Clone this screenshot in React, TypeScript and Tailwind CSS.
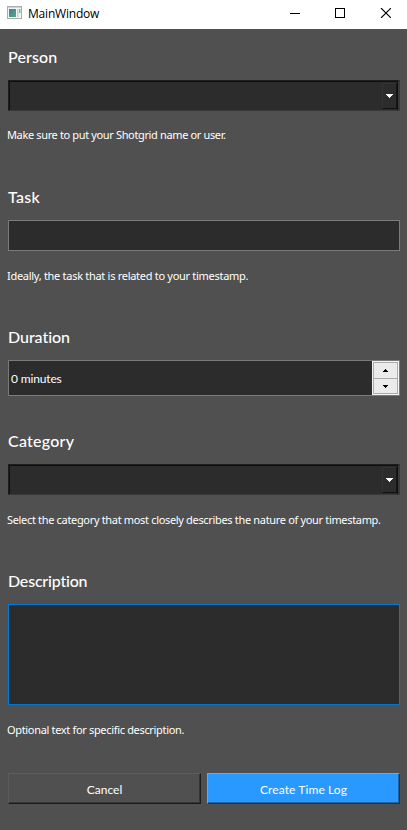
import type { ReactNode } from "react";

function Label({ children, spacing = "" }: { children: ReactNode; spacing?: string }) {
  return (
    <div className={`h-5 whitespace-nowrap font-['Lato',sans-serif] text-[16px] leading-[18px] font-medium text-white [font-variant-ligatures:none] ${spacing}`}>
      {children}
    </div>
  );
}

function Hint({ children, spacing }: { children: ReactNode; spacing: string }) {
  return (
    <div className={`-ml-px h-5 whitespace-nowrap font-['Noto_Sans',sans-serif] text-[11px] leading-5 text-white ${spacing}`}>
      {children}
    </div>
  );
}

function Combo() {
  return (
    <div className="h-[31px] border border-t-[#1e1e1e] border-r-2 border-r-[#393939] border-b-[#393939] border-l-[#1e1e1e] bg-[#2c2c2c]">
      <div className="flex h-[29px] justify-end border-t border-r border-l border-[#0f0f0f]">
        <div className="mt-px flex h-[26px] w-[15px] items-center justify-center border border-t-[#333] border-r-[#161616] border-b-[#111] border-l-[#333] bg-[#2c2c2c]">
          <svg width="7" height="4" viewBox="0 0 7 4" shapeRendering="crispEdges" fill="#fff">
            <path d="M0 0h7v1H0zM1 1h5v1H1zM2 2h3v1H2zM3 3h1v1H3z" />
          </svg>
        </div>
      </div>
    </div>
  );
}

export default function App() {
  return (
    <div className="flex h-[830px] w-[407px] flex-col overflow-hidden bg-[#505050]">
      <header className="flex h-[29px] items-start bg-white pl-[7px]">
        <svg className="mt-[6px]" width="15" height="13" viewBox="0 0 15 13">
          <defs>
            <linearGradient id="pane" x1="0" y1="0" x2="1" y2="1">
              <stop offset="0" stopColor="#4779ac" />
              <stop offset="1" stopColor="#54aa78" />
            </linearGradient>
          </defs>
          <rect x=".5" y=".5" width="14" height="12" fill="#f4f4f4" stroke="#a9adb0" />
          <path d="M1 1.5h13" stroke="#d0d3d5" />
          <rect x="2" y="3" width="7" height="8" fill="url(#pane)" />
          <rect x="10" y="3" width="1.5" height="8" fill="#c8d0d6" />
          <rect x="12" y="3" width="1.5" height="4" fill="#7fb5a4" />
        </svg>
        <h1 className="ml-[6px] flex-1 font-['Open_Sans',sans-serif] text-[12px] leading-[27px] tracking-[-0.2px] text-black">MainWindow</h1>
        <div className="mt-[8px] mr-[16px] flex gap-[35px]">
          <svg width="10" height="11" shapeRendering="crispEdges"><path d="M0 5h10v1H0z" /></svg>
          <svg width="10" height="10" shapeRendering="crispEdges"><path fillRule="evenodd" d="M0 0h10v10H0zM1 1v8h8V1z" /></svg>
          <svg width="11" height="10"><path d="M1 0l10 10M11 0L1 10" stroke="#000" strokeWidth="1.1" /></svg>
        </div>
      </header>
      <main className="flex flex-col pt-[19px] pr-[7px] pl-[8px]">
        <Label spacing="tracking-[0.15px]">Person</Label>
        <div className="mt-3"><Combo /></div>
        <div className="mt-[14px]"><Hint spacing="tracking-[-0.36px]">Make sure to put your Shotgrid name or user.</Hint></div>

        <div className="mt-[43px]"><Label spacing="tracking-[0.3px]">Task</Label></div>
        <div className="mt-3 h-[31px] border border-[#7a7a7a] bg-[#2c2c2c]" />
        <div className="mt-[15px]"><Hint spacing="tracking-[-0.29px]">Ideally, the task that is related to your timestamp.</Hint></div>

        <div className="mt-[42px]"><Label spacing="tracking-[-0.05px]">Duration</Label></div>
        <div className="mt-3 flex h-[36px] border border-[#7a7a7a] bg-[#2c2c2c]">
          <span className="flex-1 pl-[2px] font-['Lato',sans-serif] text-[12px] leading-[36px] tracking-[-0.15px] text-white">0 minutes</span>
          <div className="flex w-[27px] flex-col bg-[#f4f4f4] p-px">
            <div className="flex h-[17px] items-center justify-center border border-[#ababab] bg-[#ebebeb]">
              <svg width="5" height="3" shapeRendering="crispEdges"><path d="M2 0h1v1H2zM1 1h3v1H1zM0 2h5v1H0z" /></svg>
            </div>
            <div className="flex h-[15px] items-center justify-center border border-t-0 border-[#ababab] bg-[#ebebeb]">
              <svg width="5" height="3" shapeRendering="crispEdges"><path d="M0 0h5v1H0zM1 1h3v1H1zM2 2h1v1H2z" /></svg>
            </div>
          </div>
        </div>

        <div className="mt-[36px]"><Label spacing="tracking-[0.25px]">Category</Label></div>
        <div className="mt-3"><Combo /></div>
        <div className="mt-[15px]"><Hint spacing="tracking-[-0.33px]">Select the category that most closely describes the nature of your timestamp.</Hint></div>

        <div className="mt-[42px]"><Label spacing="tracking-[-0.2px]">Description</Label></div>
        <div className="mt-3 h-[101px] border border-[#0078d7] bg-[#2c2c2c]" />
        <div className="mt-[15px]"><Hint spacing="tracking-[-0.33px]">Optional text for specific description.</Hint></div>

        <div className="mt-[33px] flex gap-[6px]">
          <button className="h-[31px] flex-1 border border-t-[#5c5c5c] border-r-[#1c1c1c] border-b-[#1c1c1c] border-l-[#5c5c5c] bg-[#505050] pt-[3px] font-['Lato',sans-serif] text-[12px] text-white shadow-[inset_-1px_-1px_0_#353535]">
            Cancel
          </button>
          <button className="h-[31px] flex-1 border border-t-[#55adff] border-r-[#16334f] border-b-[#16334f] border-l-[#55adff] bg-[#2a99ff] pt-[3px] font-['Lato',sans-serif] text-[12px] tracking-[0.1px] text-white shadow-[inset_-1px_-1px_0_#1c66aa]">
            Create Time Log
          </button>
        </div>
      </main>
    </div>
  );
}
